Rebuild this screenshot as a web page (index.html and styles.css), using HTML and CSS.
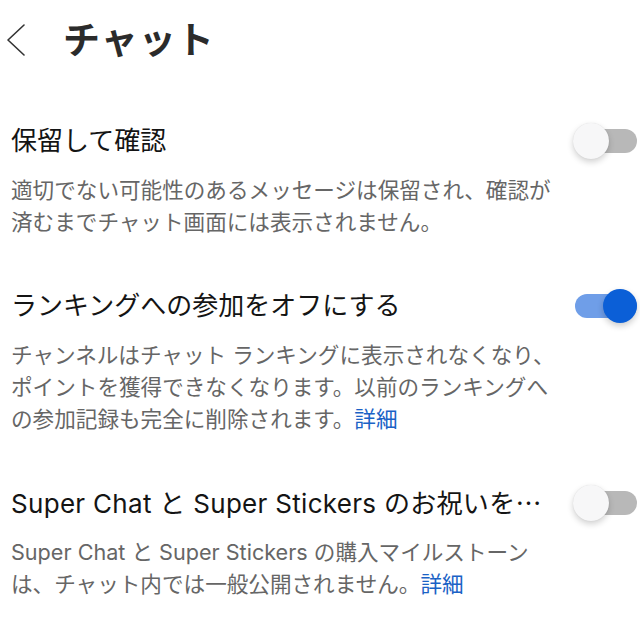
FILE: index.html
```
<!DOCTYPE html>
<html lang="ja">
<head>
<meta charset="utf-8">
<link rel="stylesheet" href="styles.css">
</head>
<body>
<header class="topbar">
  <svg class="back" width="20" height="32" viewBox="0 0 20 32"><path d="M18 1 L2 16 L18 31" fill="none" stroke="#333" stroke-width="1.6" stroke-linecap="round" stroke-linejoin="round"/></svg>
  <h1 class="page-title">チャット</h1>
</header>
<main class="settings">
  <section class="setting">
    <div class="setting-row">
      <h2 class="setting-title">保留して確認</h2>
      <span class="toggle"><span class="knob"></span></span>
    </div>
    <p class="setting-desc">適切でない可能性のあるメッセージは保留され、確認が<br>済むまでチャット画面には表示されません。</p>
  </section>
  <section class="setting">
    <div class="setting-row">
      <h2 class="setting-title">ランキングへの参加をオフにする</h2>
      <span class="toggle on"><span class="knob"></span></span>
    </div>
    <p class="setting-desc">チャンネルはチャット ランキングに表示されなくなり、<br>ポイントを獲得できなくなります。以前のランキングへ<br>の参加記録も完全に削除されます。<a class="link">詳細</a></p>
  </section>
  <section class="setting">
    <div class="setting-row">
      <h2 class="setting-title wide">Super Chat と Super Stickers のお祝いを<span class="cjk">…</span></h2>
      <span class="toggle"><span class="knob"></span></span>
    </div>
    <p class="setting-desc">Super Chat と Super Stickers の購入マイルストーン<br>は、チャット内では一般公開されません。<a class="link">詳細</a></p>
  </section>
</main>
</body>
</html>
```
FILE: styles.css
```
html, body {
  margin: 0;
  padding: 0;
  background: #ffffff;
}
body {
  width: 640px;
  font-family: "Inter", "Noto Sans CJK JP", sans-serif;
  color: #141414;
}
.topbar {
  height: 76px;
  display: flex;
  align-items: center;
  padding-left: 6px;
  box-sizing: border-box;
}
.back {
  display: block;
  margin-top: 4px;
}
.page-title {
  margin: 0 0 0 37px;
  font-family: "Noto Sans CJK JP", sans-serif;
  font-size: 37px;
  font-weight: 700;
  line-height: 1;
  color: #2b2b2b;
  letter-spacing: 1px;
}
.settings {
  padding: 47px 3px 0 11px;
  display: flex;
  flex-direction: column;
  gap: 50px;
}
.setting-row {
  height: 36px;
  display: flex;
  align-items: center;
  justify-content: space-between;
}
.setting-title {
  margin: 0;
  font-size: 26px;
  font-weight: 400;
  line-height: 36px;
  color: #141414;
  white-space: nowrap;
}
.setting-title.wide {
  letter-spacing: 0.3px;
}
.cjk {
  font-family: "Noto Sans CJK JP", sans-serif;
}
.setting-desc {
  margin: 15px 0 0 0;
  font-size: 21.6px;
  line-height: 32px;
  color: #666666;
  white-space: nowrap;
}
.link {
  color: #1a62c6;
  text-decoration: none;
}
.toggle {
  position: relative;
  width: 62px;
  height: 24px;
  border-radius: 12px;
  background: #b8b8b8;
  flex: none;
}
.toggle .knob {
  position: absolute;
  top: -6px;
  left: -2px;
  width: 36px;
  height: 36px;
  border-radius: 50%;
  background: #f7f7f8;
  box-shadow: 0 3px 6px rgba(0, 0, 0, 0.18), 0 0 1px rgba(0, 0, 0, 0.12);
}
.toggle.on {
  background: #6f9ee8;
}
.toggle.on .knob {
  left: 28px;
  top: -5px;
  width: 34px;
  height: 34px;
  background: #0b5fd7;
  box-shadow: 0 3px 6px rgba(0, 0, 0, 0.2);
}
```
